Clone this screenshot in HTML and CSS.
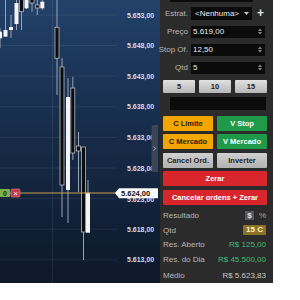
FILE: index.html
```html
<!DOCTYPE html>
<html lang="pt-BR">
<head>
    <meta charset="UTF-8">
    <title>Boleta</title>
    <link rel="stylesheet" href="styles.css">
</head>
<body>
<div class="screen">
    <div class="chart">
        <svg class="plot" width="160" height="283" viewBox="0 0 160 283">
            <g class="grid">
                <line x1="0" y1="15" x2="117" y2="15"/>
                <line x1="0" y1="45.6" x2="117" y2="45.6"/>
                <line x1="0" y1="76.2" x2="117" y2="76.2"/>
                <line x1="0" y1="106.8" x2="117" y2="106.8"/>
                <line x1="0" y1="137.4" x2="117" y2="137.4"/>
                <line x1="0" y1="168" x2="117" y2="168"/>
                <line x1="0" y1="198.6" x2="117" y2="198.6"/>
                <line x1="0" y1="229.2" x2="117" y2="229.2"/>
                <line x1="0" y1="259.8" x2="117" y2="259.8"/>
                <line x1="52.5" y1="0" x2="52.5" y2="283"/>
            </g>
            <g class="prices">
                <text x="127" y="17.5">5.653,00</text>
                <text x="127" y="48.1">5.648,00</text>
                <text x="127" y="78.7">5.643,00</text>
                <text x="127" y="109.3">5.638,00</text>
                <text x="127" y="139.9">5.633,00</text>
                <text x="127" y="170.5">5.628,00</text>
                <text x="127" y="202">5.623,00</text>
                <text x="127" y="231.7">5.618,00</text>
                <text x="127" y="262.3">5.613,00</text>
            </g>
            <g class="wicks">
                <line x1="0" y1="28" x2="0" y2="48"/>
                <line x1="5.5" y1="0" x2="5.5" y2="30"/>
                <line x1="11" y1="15" x2="11" y2="38"/>
                <line x1="16.5" y1="0" x2="16.5" y2="30"/>
                <line x1="21.5" y1="0" x2="21.5" y2="30"/>
                <line x1="26.5" y1="0" x2="26.5" y2="9"/>
                <line x1="32" y1="0" x2="32" y2="12"/>
                <line x1="37.3" y1="0" x2="37.3" y2="15"/>
                <line x1="42.3" y1="0" x2="42.3" y2="10"/>
                <line x1="57" y1="0" x2="57" y2="95"/>
                <line x1="62" y1="58" x2="62" y2="217"/>
                <line x1="68" y1="78" x2="68" y2="223"/>
                <line x1="72.8" y1="77" x2="72.8" y2="160"/>
                <line x1="78.5" y1="132" x2="78.5" y2="192"/>
                <line x1="83.5" y1="147" x2="83.5" y2="260"/>
                <line x1="88" y1="180" x2="88" y2="193"/>
            </g>
            <g class="up">
                <rect x="-2" y="31.7" width="4" height="6.6"/>
                <rect x="3.5" y="30" width="4" height="6.7"/>
                <rect x="9" y="27" width="4" height="3"/>
                <rect x="14.5" y="3" width="4" height="21"/>
                <rect x="24.5" y="0" width="4" height="8.3"/>
                <rect x="40.3" y="1.7" width="4" height="6.6"/>
                <rect x="66" y="97" width="4" height="93"/>
                <rect x="86" y="192.7" width="4" height="40"/>
            </g>
            <g class="down">
                <rect x="19.5" y="-1" width="4" height="12.7"/>
                <rect x="30" y="-1" width="4" height="4"/>
                <rect x="35.3" y="5" width="4" height="3"/>
                <rect x="55" y="27.3" width="4" height="31"/>
                <rect x="60" y="67" width="4" height="118"/>
                <rect x="70.8" y="88" width="4" height="65"/>
                <rect x="76.5" y="146" width="4" height="5"/>
                <rect x="81.5" y="147" width="4" height="85"/>
            </g>
            <line class="last" x1="0" y1="193" x2="116" y2="193"/>
            <rect class="order" x="-4" y="189" width="14" height="8" rx="1"/>
            <text class="order-txt" x="3" y="195.6">0</text>
            <rect class="cancel" x="11" y="189" width="9" height="8" rx="1"/>
            <text class="cancel-txt" x="15.5" y="195.8">×</text>
            <path class="tag" d="M115 193 L119 188.3 H158 V198.3 H119 Z"/>
            <text class="tag-txt" x="121" y="196.2">5.624,00</text>
            <path class="tab" d="M158 125 H153.5 Q151.5 125 151.5 127 V170 Q151.5 172 153.5 172 H158 Z"/>
            <path class="tab-arrow" d="M153.6 146.5 L155.6 148.5 L153.6 150.5"/>
        </svg>
    </div>

    <div class="panel">
        <div class="topbar"></div>

        <div class="field first">
            <span class="lbl">Estrat.</span>
            <div class="box select">
                <span>&lt;Nenhuma&gt;</span>
                <svg class="caret" width="5" height="3" viewBox="0 0 5 3"><path d="M0 0 H5 L2.5 3 Z"/></svg>
            </div>
            <span class="plus">+</span>
        </div>
        <div class="field">
            <span class="lbl">Preço</span>
            <div class="box"><span>5.619,00</span><svg class="spin" width="4" height="7" viewBox="0 0 4 7"><path d="M0 3 L2 0.5 L4 3 Z M0 4 L2 6.5 L4 4 Z"/></svg></div>
        </div>
        <div class="field">
            <span class="lbl">Stop Of.</span>
            <div class="box"><span>12,50</span><svg class="spin" width="4" height="7" viewBox="0 0 4 7"><path d="M0 3 L2 0.5 L4 3 Z M0 4 L2 6.5 L4 4 Z"/></svg></div>
        </div>
        <div class="field">
            <span class="lbl">Qtd</span>
            <div class="box"><span>5</span><svg class="spin" width="4" height="7" viewBox="0 0 4 7"><path d="M0 3 L2 0.5 L4 3 Z M0 4 L2 6.5 L4 4 Z"/></svg></div>
        </div>

        <div class="qty">
            <button class="btn-gray">5</button>
            <button class="btn-gray">10</button>
            <button class="btn-gray">15</button>
        </div>

        <div class="msg"></div>

        <div class="orders">
            <button class="btn-buy">C Limite</button>
            <button class="btn-sell">V Stop</button>
            <button class="btn-buy">C Mercado</button>
            <button class="btn-sell">V Mercado</button>
            <button class="btn-gray">Cancel Ord.</button>
            <button class="btn-gray">Inverter</button>
            <button class="btn-red wide">Zerar</button>
            <button class="btn-red wide">Cancelar ordens + Zerar</button>
        </div>

        <div class="stats">
            <div class="stat">
                <span>Resultado</span>
                <span class="units"><b class="cur">$</b><i>%</i></span>
            </div>
            <div class="stat">
                <span>Qtd</span>
                <b class="badge">15 C</b>
            </div>
            <div class="stat">
                <span>Res. Aberto</span>
                <span class="pos">R$ 125,00</span>
            </div>
            <div class="stat">
                <span>Res. do Dia</span>
                <span class="pos">R$ 45.500,00</span>
            </div>
            <div class="stat last">
                <span>Médio</span>
                <span class="avg">R$ 5.623,83</span>
            </div>
        </div>
    </div>
</div>
</body>
</html>
```

FILE: styles.css
```css
body {
    margin: 0;
    background-color: #fff;
    font-family: "Liberation Sans", Arial, sans-serif;
}
.screen {
    display: flex;
    height: 283px;
}
.chart {
    width: 160px;
    height: 283px;
    background: linear-gradient(#22416a, #172c4a 45%, #0d1829);
    overflow: hidden;
}
.plot {
    display: block;
}
.grid line {
    stroke: rgba(255, 255, 255, 0.07);
    stroke-width: 1;
}
.prices text {
    fill: #d6dce6;
    font-size: 7px;
    font-weight: bold;
}
.wicks line {
    stroke: #9ba3b0;
    stroke-width: 1;
}
.up rect {
    fill: #f4f4f4;
}
.down rect {
    fill: #0c0c0c;
    stroke: #b4b9c2;
    stroke-width: 0.8;
}
.last {
    stroke: #c9a24a;
    stroke-width: 1;
}
.order {
    fill: #7fb04c;
}
.order-txt {
    fill: #1d2a10;
    font-size: 7px;
    font-weight: bold;
}
.cancel {
    fill: #c23d4c;
    stroke: #e07b86;
    stroke-width: 0.6;
}
.cancel-txt {
    fill: #fff;
    font-size: 8px;
    text-anchor: middle;
}
.tag {
    fill: #fafafa;
}
.tag-txt {
    fill: #111;
    font-size: 7.5px;
    font-weight: bold;
}
.tab {
    fill: #3d4552;
}
.tab-arrow {
    fill: none;
    stroke: #b8bec8;
    stroke-width: 0.9;
}

.panel {
    width: 113px;
    box-sizing: border-box;
    padding: 0 6px 0 3px;
    background-color: #2b2b2b;
    color: #b8b8b8;
    font-size: 8px;
    display: flex;
    flex-direction: column;
}
.topbar {
    height: 2px;
    margin-left: 7px;
    width: 83px;
    background-color: #0b0b0b;
}
.field {
    display: flex;
    align-items: center;
    height: 12.5px;
    margin-top: 6px;
}
.field.first {
    height: 13px;
    margin-top: 5px;
}
.lbl {
    flex: none;
    width: 25px;
    margin-right: 3px;
    display: flex;
    justify-content: flex-end;
    white-space: nowrap;
}
.box {
    flex: 1;
    height: 100%;
    margin-right: 2px;
    background-color: #0b0b0b;
    color: #ececec;
    display: flex;
    align-items: center;
    justify-content: space-between;
    padding: 0 3px 0 2px;
}
.box.select {
    flex: none;
    width: 61px;
    box-sizing: border-box;
    margin-right: 0;
    padding-left: 4px;
}
.caret path {
    fill: #c8c8c8;
}
.spin path {
    fill: #8a8a8a;
}
.plus {
    margin-left: 5px;
    color: #e4e4e4;
    font-size: 12px;
    font-weight: bold;
    line-height: 12px;
}
button {
    border: none;
    padding: 0;
    font-family: inherit;
    font-size: 7.5px;
    font-weight: bold;
    border-radius: 1px;
    white-space: nowrap;
}
.qty {
    display: grid;
    grid-template-columns: repeat(3, 32px);
    column-gap: 4px;
    margin-top: 6px;
    height: 13px;
}
.btn-gray {
    background: linear-gradient(#e2e2e2, #b6b6b6);
    color: #1e1e1e;
}
.msg {
    height: 13px;
    margin: 4.5px 1px 0 7px;
    background-color: #0b0b0b;
}
.orders {
    display: grid;
    grid-template-columns: 1fr 1fr;
    grid-auto-rows: 15px;
    gap: 3.4px 4px;
    margin-top: 6.3px;
}
.orders .wide {
    grid-column: 1 / 3;
}
.btn-buy {
    background-color: #f4a600;
    color: #2a1c00;
}
.btn-sell {
    background-color: #1e9a48;
    color: #fff;
}
.orders .btn-gray {
    background: linear-gradient(#d0d0d0, #b2b2b2);
}
.btn-red {
    background-color: #d8262c;
    color: #fff;
}
.stats {
    margin-top: 4px;
}
.stat {
    height: 14.5px;
    display: flex;
    align-items: center;
    justify-content: space-between;
    padding-right: 1px;
}
.stat.last {
    margin-top: 2px;
}
.units {
    display: flex;
    align-items: center;
}
.cur {
    width: 9px;
    height: 9px;
    line-height: 9px;
    text-align: center;
    background-color: #56595e;
    color: #e2e2e2;
    margin-right: 5px;
}
.units i {
    font-style: normal;
    color: #a8a8a8;
}
.badge {
    padding: 0 3px;
    height: 10px;
    line-height: 10px;
    background-color: #8c7226;
    color: #fff4c8;
    border-radius: 1px;
}
.pos {
    color: #42b87a;
}
.avg {
    color: #c8c8c8;
}
```
